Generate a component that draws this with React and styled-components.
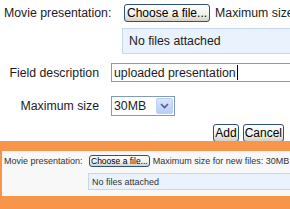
import styled, { createGlobalStyle } from 'styled-components';

const Global = createGlobalStyle`
  html, body { margin: 0; padding: 0; background: #fff; }
  body {
    font-family: "Liberation Sans", Arial, sans-serif;
    color: #1c1c1c;
    width: 290px;
    height: 209px;
    overflow: hidden;
  }
`;

const Page = styled.div`
  width: 290px;
  height: 209px;
  overflow: hidden;
  display: flex;
  flex-direction: column;
`;

const Form = styled.div`
  height: 141px;
  display: flex;
  flex-direction: column;
  font-size: 12.3px;
`;

const Row = styled.div`
  display: flex;
  align-items: center;
  height: ${(p) => p.h}px;
  margin-top: ${(p) => p.mt || 0}px;
  padding-left: ${(p) => p.pl || 0}px;
  justify-content: ${(p) => (p.end ? 'flex-end' : 'flex-start')};
  padding-right: ${(p) => p.pr || 0}px;
  white-space: nowrap;
`;

const Label = styled.span`
  width: ${(p) => p.w}px;
  flex: none;
  text-align: ${(p) => (p.right ? 'right' : 'left')};
  padding-right: ${(p) => p.gap || 0}px;
  box-sizing: border-box;
`;

const Button = styled.button`
  font-family: inherit;
  font-size: ${(p) => p.fs || 12}px;
  color: #000;
  height: ${(p) => p.h || 18}px;
  padding: 0 ${(p) => p.px || 2}px;
  border: 1px solid #2f4f7f;
  border-radius: 3px;
  background: linear-gradient(#ffffff, #f0f0ea 60%, #d6d0c5);
  margin-left: ${(p) => p.ml || 0}px;
  flex: none;
  line-height: 1;
`;

const Hint = styled.span`
  margin-left: ${(p) => p.ml}px;
`;

const FileBox = styled.div`
  margin-left: ${(p) => p.ml}px;
  height: ${(p) => p.h}px;
  flex: none;
  width: 400px;
  box-sizing: border-box;
  border: 1px solid #c5d7ee;
  background: #e9f2fd;
  display: flex;
  align-items: center;
  padding-left: ${(p) => p.pl}px;
`;

const Input = styled.div`
  width: 300px;
  height: 19px;
  box-sizing: border-box;
  border: 1px solid #7f9db9;
  background: #fff;
  display: flex;
  align-items: center;
  padding-left: 2px;
  flex: none;
`;

const Caret = styled.span`
  display: inline-block;
  width: 1px;
  height: 15px;
  background: #000;
  margin-left: 1px;
`;

const Select = styled.div`
  width: 64px;
  height: 20px;
  box-sizing: border-box;
  border: 1px solid #7f9db9;
  background: #fff;
  display: flex;
  align-items: stretch;
  flex: none;
`;

const SelectText = styled.span`
  flex: 1;
  display: flex;
  align-items: center;
  padding-left: 2px;
`;

const Arrow = styled.span`
  width: 15px;
  margin: 1px;
  border: 1px solid #bcd0f8;
  border-radius: 2px;
  background: linear-gradient(#d8e4fd, #b9cdf7);
  display: flex;
  align-items: center;
  justify-content: center;
`;

const Band = styled.div`
  flex: 1;
  background: #f7964a;
  padding: 10px 0 13px 2px;
`;

const Panel = styled.div`
  background: #f8f8f8;
  height: 45px;
  font-size: 9px;
  color: #333;
  display: flex;
  flex-direction: column;
  padding-top: 4px;
  box-sizing: border-box;
  overflow: hidden;
`;

export default function App() {
  return (
    <Page>
      <Global />
      <Form>
        <Row h={17} mt={4} pl={4}>
          <Label w={120}>Movie presentation:</Label>
          <Button h={18} px={2}>Choose a file...</Button>
          <Hint ml={5}>Maximum size for new files: 30MB</Hint>
        </Row>
        <Row h={26} mt={7}>
          <FileBox ml={122} h={26} pl={6}>No files attached</FileBox>
        </Row>
        <Row h={19} mt={9}>
          <Label w={111} right gap={12}>Field description</Label>
          <Input>
            uploaded presentation<Caret />
          </Input>
        </Row>
        <Row h={20} mt={14}>
          <Label w={111} right gap={12}>Maximum size</Label>
          <Select>
            <SelectText>30MB</SelectText>
            <Arrow>
              <svg width="9" height="6" viewBox="0 0 9 6">
                <path d="M1 1 L4.5 4.5 L8 1" fill="none" stroke="#4d6185" strokeWidth="1.6" />
              </svg>
            </Arrow>
          </Select>
        </Row>
        <Row h={18} mt={8} end pr={6}>
          <Button h={18} px={1}>Add</Button>
          <Button h={18} px={1} ml={4}>Cancel</Button>
        </Row>
      </Form>
      <Band>
        <Panel>
          <Row h={12} pl={2}>
            <Label w={85}>Movie presentation:</Label>
            <Button h={12} fs={8.5} px={1}>Choose a file...</Button>
            <Hint ml={3}>Maximum size for new files: 30MB</Hint>
          </Row>
          <Row h={17} mt={6}>
            <FileBox ml={86} h={17} pl={3}>No files attached</FileBox>
          </Row>
        </Panel>
      </Band>
    </Page>
  );
}
